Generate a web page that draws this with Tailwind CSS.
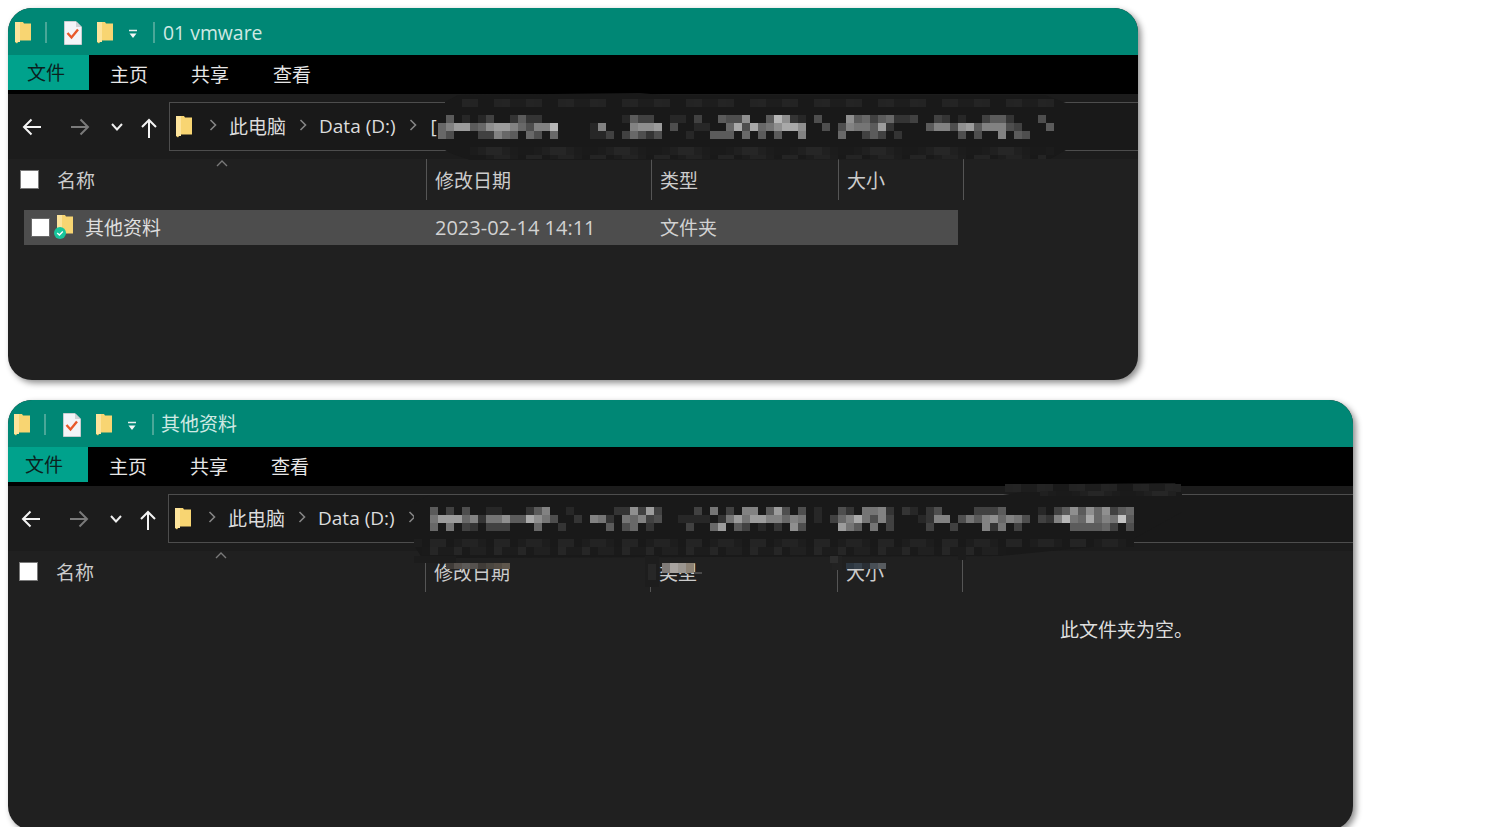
<!doctype html>
<html><head><meta charset="utf-8"><script src="https://cdn.jsdelivr.net/npm/@tailwindcss/browser@4"></script></head>
<body class="relative bg-white h-[827px] w-[1490px] overflow-hidden font-['Open_Sans','Noto_Sans_CJK_SC',sans-serif] text-[19px]">
<div class="flex flex-col gap-5 items-start p-2">

<!-- window 1 -->
<div class="w-[1130px] h-[372px] shrink-0 rounded-[24px] overflow-hidden bg-[#202020] shadow-[3px_3px_6px_rgba(0,0,0,0.45)]">
  <div class="h-[47px] bg-[#008775] flex items-center pl-[7px] pt-[2px] text-[#cfe9e3]">
    <svg class="w-4 h-[22px] shrink-0" viewBox="0 0 16 22"><path d="M0 0 H8 L9 1.5 H16 V18.5 H4 L2 21.5 L0 20Z" fill="#f8d572"/><path d="M0 0 H5 V20 H0Z" fill="#fde49c"/></svg>
    <div class="w-[2px] h-[21px] ml-[14px] bg-[#4aa798]"></div>
    <svg class="w-[18px] h-6 ml-[17px] shrink-0" viewBox="0 0 18 24"><path d="M0.5 0.5 H12 L17.5 6 V23.5 H0.5Z" fill="#f4f4f8" stroke="#c9ccd0"/><path d="M12 0.5 V6 H17.5" fill="#d0d2d6"/><path d="M3.5 12 L7.5 16.5 L14 8.5" fill="none" stroke="#e8592b" stroke-width="2.4"/></svg>
    <svg class="w-4 h-[22px] ml-[15px] shrink-0" viewBox="0 0 16 22"><path d="M0 0 H8 L9 1.5 H16 V18.5 H4 L2 21.5 L0 20Z" fill="#f8d572"/><path d="M0 0 H5 V20 H0Z" fill="#fde49c"/></svg>
    <svg class="w-[10px] h-[10px] ml-[15px] shrink-0 mt-[2px]" viewBox="0 0 10 10"><path d="M1 1.5 H9" stroke="#e8f0ee" stroke-width="1.4"/><path d="M1.5 4.5 H8.5 L5 9Z" fill="#f4f8f7"/></svg>
    <div class="w-[2px] h-[21px] ml-[15px] bg-[#4aa798]"></div>
    <span class="ml-[8px] whitespace-nowrap text-[19.4px]">01 vmware</span>
  </div>
  <div class="h-[39px] bg-black flex items-start text-[#e6e6e6]">
    <div class="w-[81px] h-[35px] bg-[#00a28c] text-[#0b211e] flex items-center pl-[19px] pt-[2px]">文件</div>
    <div class="ml-[21px] h-[39px] flex items-center pt-[2px]">主页</div>
    <div class="ml-[43px] h-[39px] flex items-center pt-[2px]">共享</div>
    <div class="ml-[44px] h-[39px] flex items-center pt-[2px]">查看</div>
  </div>
  <div class="h-[65px] bg-[#1c1c1c] flex items-center pl-[14px] text-[#dcdcdc]">
    <svg class="w-5 h-[18px] shrink-0" viewBox="0 0 20 18"><path d="M19 9 H2 M9.5 1.5 L2 9 L9.5 16.5" fill="none" stroke="#f4f4f4" stroke-width="2"/></svg>
    <svg class="w-5 h-[18px] ml-[28px] shrink-0" viewBox="0 0 20 18"><path d="M1 9 H18 M10.5 1.5 L18 9 L10.5 16.5" fill="none" stroke="#7a7a7a" stroke-width="2"/></svg>
    <svg class="w-[14px] h-[10px] ml-[20px] shrink-0" viewBox="0 0 14 10"><path d="M2 2 L7 7.5 L12 2" fill="none" stroke="#eeeeee" stroke-width="2"/></svg>
    <svg class="w-4 h-5 ml-[17px] mt-[3px] shrink-0" viewBox="0 0 16 20"><path d="M8 20 V2 M1 9 L8 2 L15 9" fill="none" stroke="#f4f4f4" stroke-width="2"/></svg>
    <div class="ml-[12px] flex-1 h-[49px] min-w-0 bg-[#191919] border border-r-0 border-[#4d4d4d] flex items-center pl-[6px] overflow-hidden whitespace-nowrap">
      <svg class="w-4 h-[22px] shrink-0" viewBox="0 0 16 22"><path d="M0 0 H8 L9 1.5 H16 V18.5 H4 L2 21.5 L0 20Z" fill="#f8d572"/><path d="M0 0 H5 V20 H0Z" fill="#fde49c"/></svg>
      <svg class="w-2 h-3 ml-[17px] -mt-[4px] shrink-0" viewBox="0 0 8 12"><path d="M1.5 1 L6.5 6 L1.5 11" fill="none" stroke="#858585" stroke-width="1.6"/></svg>
      <span class="ml-[12px] mt-[1px]">此电脑</span>
      <svg class="w-2 h-3 ml-[13px] -mt-[4px] shrink-0" viewBox="0 0 8 12"><path d="M1.5 1 L6.5 6 L1.5 11" fill="none" stroke="#858585" stroke-width="1.6"/></svg>
      <span class="ml-[12px]">Data (D:)</span>
      <svg class="w-2 h-3 ml-[13px] -mt-[4px] shrink-0" viewBox="0 0 8 12"><path d="M1.5 1 L6.5 6 L1.5 11" fill="none" stroke="#858585" stroke-width="1.6"/></svg>
      <span class="ml-[14px]">[</span>
    </div>
  </div>
  <div class="h-[41px] flex text-[#cccccc]">
    <div class="relative w-[419px] shrink-0 flex items-center pl-[12px] border-r border-[#555555]">
      <div class="w-[19px] h-[19px] bg-white border border-[#7a7a7a]"></div>
      <span class="ml-[18px] mt-[3px]">名称</span>
      <svg class="absolute left-[208px] top-0 w-3 h-2" viewBox="0 0 12 8"><path d="M1 7 L6 2 L11 7" fill="none" stroke="#7a7a7a" stroke-width="1.4"/></svg>
    </div>
    <div class="w-[225px] shrink-0 flex items-center pl-[8px] pt-[3px] border-r border-[#555555]">修改日期</div>
    <div class="w-[187px] shrink-0 flex items-center pl-[8px] pt-[3px] border-r border-[#555555]">类型</div>
    <div class="w-[125px] shrink-0 flex items-center pl-[8px] pt-[3px] border-r border-[#555555]">大小</div>
  </div>
  <div class="mt-[10px] ml-4 w-[934px] h-[35px] bg-[#4d4d4d] flex items-center text-[#dedede]">
    <div class="w-[411px] shrink-0 flex items-center pl-[7px]">
      <div class="w-[19px] h-[19px] bg-white border border-[#6a6a6a]"></div>
      <div class="relative w-4 h-[22px] ml-[7px] -mt-[3px] shrink-0">
        <svg class="w-4 h-[22px]" viewBox="0 0 16 22"><path d="M0 0 H8 L9 1.5 H16 V18.5 H4 L2 21.5 L0 20Z" fill="#f8d572"/><path d="M0 0 H5 V20 H0Z" fill="#fde49c"/></svg>
        <svg class="absolute -left-[3px] top-[12px] w-3 h-3" viewBox="0 0 12 12"><circle cx="6" cy="6" r="6" fill="#18c59b"/><path d="M3.2 6 L5.4 8 L8.8 4.4" fill="none" stroke="#fff" stroke-width="1.4"/></svg>
      </div>
      <span class="ml-[12px] mt-[1px]">其他资料</span>
    </div>
    <div class="w-[225px] shrink-0 text-[#d2d2d2] text-[20px] mt-[1px]">2023-02-14 14:11</div>
    <div class="text-[#d2d2d2] mt-[1px]">文件夹</div>
  </div>
</div>

<!-- window 2 -->
<div class="w-[1345px] h-[430px] shrink-0 rounded-[24px] overflow-hidden bg-[#202020] shadow-[3px_3px_6px_rgba(0,0,0,0.45)]">
  <div class="h-[47px] bg-[#008775] flex items-center pl-[6px] pt-[2px] text-[#cfe9e3]">
    <svg class="w-4 h-[22px] shrink-0" viewBox="0 0 16 22"><path d="M0 0 H8 L9 1.5 H16 V18.5 H4 L2 21.5 L0 20Z" fill="#f8d572"/><path d="M0 0 H5 V20 H0Z" fill="#fde49c"/></svg>
    <div class="w-[2px] h-[21px] ml-[14px] bg-[#4aa798]"></div>
    <svg class="w-[18px] h-6 ml-[17px] shrink-0" viewBox="0 0 18 24"><path d="M0.5 0.5 H12 L17.5 6 V23.5 H0.5Z" fill="#f4f4f8" stroke="#c9ccd0"/><path d="M12 0.5 V6 H17.5" fill="#d0d2d6"/><path d="M3.5 12 L7.5 16.5 L14 8.5" fill="none" stroke="#e8592b" stroke-width="2.4"/></svg>
    <svg class="w-4 h-[22px] ml-[15px] shrink-0" viewBox="0 0 16 22"><path d="M0 0 H8 L9 1.5 H16 V18.5 H4 L2 21.5 L0 20Z" fill="#f8d572"/><path d="M0 0 H5 V20 H0Z" fill="#fde49c"/></svg>
    <svg class="w-[10px] h-[10px] ml-[15px] shrink-0 mt-[2px]" viewBox="0 0 10 10"><path d="M1 1.5 H9" stroke="#e8f0ee" stroke-width="1.4"/><path d="M1.5 4.5 H8.5 L5 9Z" fill="#f4f8f7"/></svg>
    <div class="w-[2px] h-[21px] ml-[15px] bg-[#4aa798]"></div>
    <span class="ml-[7px] whitespace-nowrap">其他资料</span>
  </div>
  <div class="h-[39px] bg-black flex items-start text-[#e6e6e6]">
    <div class="w-[80px] h-[35px] bg-[#00a28c] text-[#0b211e] flex items-center pl-[17px] pt-[2px]">文件</div>
    <div class="ml-[21px] h-[39px] flex items-center pt-[2px]">主页</div>
    <div class="ml-[43px] h-[39px] flex items-center pt-[2px]">共享</div>
    <div class="ml-[43px] h-[39px] flex items-center pt-[2px]">查看</div>
  </div>
  <div class="h-[65px] bg-[#1c1c1c] flex items-center pl-[13px] text-[#dcdcdc]">
    <svg class="w-5 h-[18px] shrink-0" viewBox="0 0 20 18"><path d="M19 9 H2 M9.5 1.5 L2 9 L9.5 16.5" fill="none" stroke="#f4f4f4" stroke-width="2"/></svg>
    <svg class="w-5 h-[18px] ml-[28px] shrink-0" viewBox="0 0 20 18"><path d="M1 9 H18 M10.5 1.5 L18 9 L10.5 16.5" fill="none" stroke="#7a7a7a" stroke-width="2"/></svg>
    <svg class="w-[14px] h-[10px] ml-[20px] shrink-0" viewBox="0 0 14 10"><path d="M2 2 L7 7.5 L12 2" fill="none" stroke="#eeeeee" stroke-width="2"/></svg>
    <svg class="w-4 h-5 ml-[17px] mt-[3px] shrink-0" viewBox="0 0 16 20"><path d="M8 20 V2 M1 9 L8 2 L15 9" fill="none" stroke="#f4f4f4" stroke-width="2"/></svg>
    <div class="ml-[12px] flex-1 h-[49px] min-w-0 bg-[#191919] border border-r-0 border-[#4d4d4d] flex items-center pl-[6px] overflow-hidden whitespace-nowrap">
      <svg class="w-4 h-[22px] shrink-0" viewBox="0 0 16 22"><path d="M0 0 H8 L9 1.5 H16 V18.5 H4 L2 21.5 L0 20Z" fill="#f8d572"/><path d="M0 0 H5 V20 H0Z" fill="#fde49c"/></svg>
      <svg class="w-2 h-3 ml-[17px] -mt-[4px] shrink-0" viewBox="0 0 8 12"><path d="M1.5 1 L6.5 6 L1.5 11" fill="none" stroke="#858585" stroke-width="1.6"/></svg>
      <span class="ml-[12px] mt-[1px]">此电脑</span>
      <svg class="w-2 h-3 ml-[13px] -mt-[4px] shrink-0" viewBox="0 0 8 12"><path d="M1.5 1 L6.5 6 L1.5 11" fill="none" stroke="#858585" stroke-width="1.6"/></svg>
      <span class="ml-[12px]">Data (D:)</span>
      <svg class="w-2 h-3 ml-[13px] -mt-[4px] shrink-0" viewBox="0 0 8 12"><path d="M1.5 1 L6.5 6 L1.5 11" fill="none" stroke="#858585" stroke-width="1.6"/></svg>
    </div>
  </div>
  <div class="h-[41px] flex text-[#cccccc]">
    <div class="relative w-[418px] shrink-0 flex items-center pl-[11px] border-r border-[#555555]">
      <div class="w-[19px] h-[19px] bg-white border border-[#7a7a7a]"></div>
      <span class="ml-[18px] mt-[3px]">名称</span>
      <svg class="absolute left-[207px] top-0 w-3 h-2" viewBox="0 0 12 8"><path d="M1 7 L6 2 L11 7" fill="none" stroke="#7a7a7a" stroke-width="1.4"/></svg>
    </div>
    <div class="w-[225px] shrink-0 flex items-center pl-[8px] pt-[3px] border-r border-[#555555]">修改日期</div>
    <div class="w-[187px] shrink-0 flex items-center pl-[8px] pt-[3px] border-r border-[#555555]">类型</div>
    <div class="w-[125px] shrink-0 flex items-center pl-[8px] pt-[3px] border-r border-[#555555]">大小</div>
  </div>
  <div class="mt-[24px] ml-[1052px] text-[#dedede] whitespace-nowrap">此文件夹为空。</div>
</div>
</div>

<!-- pixelated censoring lies over the address bars -->
<svg id="mosaic" class="absolute left-0 top-0 w-[1490px] h-[827px] pointer-events-none" viewBox="0 0 1490 827"></svg>
<script>
const svg=document.getElementById('mosaic');
const NS='http://www.w3.org/2000/svg';
function add(tag,attrs){const e=document.createElementNS(NS,tag);for(const k in attrs)e.setAttribute(k,attrs[k]);svg.appendChild(e);}
function rect(x,y,w,h,fill){add('rect',{x,y,width:w,height:h,fill});}
function cell(x,y,c){const g=26+parseInt(c,16)*13;rect(x,y,8,8,`rgb(${g},${g},${g})`);}
function rows(list,x0,y0){list.forEach((r,j)=>{[...r].forEach((c,i)=>{if(c!=='.')cell(x0+i*8,y0+j*8,c);});});}
function sparse(x0,y,spec){spec.trim().split(/\s+/).forEach(p=>{const [i,c]=p.split(':');cell(x0+i*8,y,c);});}
const dimColors=['#1a1a1a','#1d1d1d','#202020','#232323','#262626','#191919','#1c1c1c','#242424'];
function dim(x0,x1,y,seed,h){for(let x=x0,i=0;x<x1;x+=8,i++){const v=(i*i*7+i*13+seed*31)%8;rect(x,y,8,h||8,dimColors[v]);}}

/* window 1 */
add('polygon',{points:'445,102 458,95 640,93 662,95 1045,95 1066,103 1066,150 1050,159 470,160 450,153 445,150',fill:'#191919'});
dim(462,1050,99,1);dim(470,1050,147,2);dim(478,1040,155,3,4);
rows([
 '.5.1.13..2522..........1533..11.3..5449'+'..5c921.4...956356223..32.1..3552...4.',
 '68aa569aa86488c....18...899a.4..11..6b4b'+'679bb9..4.48775a2....58849a588843...5'
],438,115);
sparse(438,131,'0:6 1:4 5:3 6:3 7:8 8:6 9:5 11:6 12:4 14:6 19:1 20:1 21:3 23:3 24:6 25:4 26:2 27:4 31:1 34:5 35:5 36:5 38:6 40:5 42:5 45:8 50:6 53:3 54:5 55:3 57:2 65:4 67:4 70:8 72:5 73:4');

/* window 2 */
add('polygon',{points:'414,502 430,495 1003,495 1075,484 1175,483 1182,494 1182,512 1135,538 1130,543 1000,556 422,558 414,545',fill:'#191919'});
dim(1005,1180,484,5);dim(1040,1176,491,6,5);
dim(414,1128,539,7);dim(422,1000,547,8);
sparse(430,507,'0:5 2:3 4:4 7:1 8:1 12:2 13:5 14:8 17:1 23:2 24:2 25:9 26:3 27:a 28:3 33:3 35:7 37:3 39:8 40:8 42:5 43:a 44:4 46:4 48:1 51:4 52:2 54:7 55:7 56:8 57:2 59:2 60:1 62:2 63:4 68:3 69:3 70:3 71:5 76:1 78:3 79:5 80:9 81:5 82:9 83:6 84:9 85:3 86:5 87:6');
sparse(430,515,'0:7 1:a 2:a 3:a 4:6 5:8 6:2 7:7 8:7 9:9 10:5 11:5 12:b 13:9 14:7 15:4 18:2 20:8 21:7 22:2 24:7 25:6 26:8 27:3 28:4 31:1 32:1 33:1 34:1 36:2 37:7 38:a 39:7 40:a 41:a 42:8 43:8 44:6 45:8 46:7 48:1 50:3 51:6 52:8 53:b 54:7 55:4 56:8 57:3 61:1 62:2 63:8 64:8 66:4 67:7 68:5 69:8 70:9 71:6 72:8 73:7 74:4 76:3 77:2 78:8 79:c 80:7 81:6 82:b 83:6 84:8 85:7 86:d 87:5');
sparse(430,523,'0:6 2:7 4:3 5:2 7:3 8:3 9:3 13:6 16:2 22:5 24:4 25:6 27:2 32:3 35:6 36:a 38:5 39:3 41:1 43:2 45:9 46:4 51:a 52:7 53:5 55:7 57:3 62:3 65:3 69:8 70:2 71:7 73:3 80:5 81:5 82:5 83:5 84:6 85:3 87:4');
/* spill of the blur into the column header */
rect(414,556,42,7,'#1c1c1c');rect(645,556,14,31,'#1d1d1d');rect(648,564,8,16,'#272727');rect(832,556,10,14,'#222222');rect(830,556,8,7,'#2e2e2e');rect(958,555,8,5,'#1c1c1c');
[[446,'#3f3b38'],[454,'#55504c'],[462,'#5c5a58'],[470,'#56524f'],[478,'#403c38'],[486,'#4a4640'],[494,'#534c44'],[502,'#5e564c']].forEach(([x,c])=>rect(x,563,8,6,c));
[[662,'#7f7b78'],[670,'#a8a4a0'],[678,'#9b9690'],[686,'#8c8275']].forEach(([x,c])=>rect(x,563,8,10,c));
rect(694,572,8,2,'#4a4a4a');
[[846,'#2c3640'],[854,'#36404a'],[862,'#2a2f35'],[870,'#484f56'],[878,'#585c60']].forEach(([x,c])=>rect(x,563,8,6,c));
</script>
</body></html>
